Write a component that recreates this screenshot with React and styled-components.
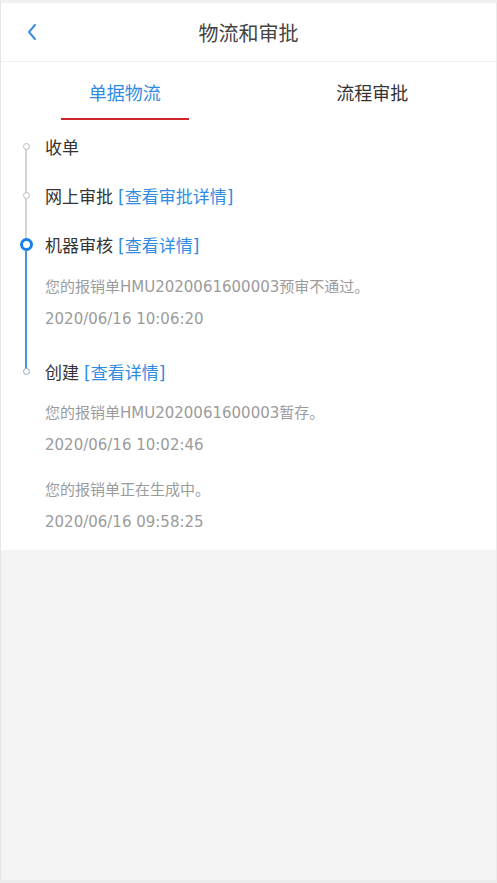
import React, { useState } from "react";
import styled, { createGlobalStyle } from "styled-components";

const GlobalStyle = createGlobalStyle`
  html, body {
    margin: 0;
    padding: 0;
    background: #f0f0f0;
  }
  body {
    font-family: "DejaVu Sans", "Noto Sans CJK SC", sans-serif;
  }
  * {
    box-sizing: border-box;
  }
`;

const Frame = styled.div`
  height: 883px;
  display: flex;
  flex-direction: column;
  border-top: 3px solid #f1f1f1;
  border-left: 1px solid #e6e6e6;
  border-right: 1px solid #ececec;
  border-bottom: 3px solid #ebebeb;
  background: #f4f4f4;
`;

const Header = styled.header`
  display: grid;
  grid-template-columns: 64px 1fr 64px;
  align-items: center;
  height: 59px;
  background: #fff;
  border-bottom: 1px solid #f1f1f1;
`;

const BackButton = styled.button`
  display: flex;
  align-items: center;
  justify-content: flex-start;
  padding: 0 0 0 25px;
  height: 100%;
  border: 0;
  background: none;
  cursor: pointer;
`;

const Title = styled.h1`
  margin: 0;
  text-align: center;
  font-size: 20px;
  font-weight: 400;
  color: #444;
  font-family: "Noto Sans CJK SC", sans-serif;
`;

const Tabs = styled.nav`
  display: flex;
  height: 60px;
  background: #fff;
`;

const Tab = styled.div`
  flex: 1;
  display: flex;
  justify-content: center;
  align-items: stretch;
  cursor: pointer;
`;

const TabLabel = styled.span`
  display: flex;
  align-items: center;
  padding: 4px 28px 0;
  font-size: 18px;
  font-family: "Noto Sans CJK SC", sans-serif;
  color: ${(p) => (p.$active ? "#2f8ce2" : "#333")};
  border-bottom: 2px solid ${(p) => (p.$active ? "#d0252c" : "transparent")};
  margin-bottom: 2px;
`;

const Timeline = styled.ul`
  list-style: none;
  margin: 0;
  padding: 0 0 12px;
  background: #fff;
`;

const Step = styled.li`
  display: grid;
  grid-template-columns: 44px 1fr;
`;

const Rail = styled.div`
  position: relative;

  &::after {
    content: "";
    display: ${(p) => (p.$line ? "block" : "none")};
    position: absolute;
    left: 24px;
    width: 1.5px;
    top: 24px;
    bottom: -24px;
    background: ${(p) => p.$line};
  }
`;

const DotBox = styled.div`
  height: ${(p) => p.$h || 49}px;
  display: flex;
  align-items: center;
  justify-content: center;
  width: 50px;
  position: relative;
  z-index: 1;
`;

const Dot = styled.span`
  display: block;
  width: ${(p) => (p.$big ? 13 : 7)}px;
  height: ${(p) => (p.$big ? 13 : 7)}px;
  border-radius: 50%;
  background: #fff;
  border: ${(p) => (p.$big ? 3 : 1.5)}px solid ${(p) => p.$color};
`;

const Body = styled.div`
  display: flex;
  flex-direction: column;
  padding-bottom: ${(p) => p.$gap || 0}px;
`;

const StepTitle = styled.div`
  height: ${(p) => p.$h || 49}px;
  display: flex;
  align-items: center;
  font-size: 17px;
  color: #333;
  white-space: nowrap;
`;

const Link = styled.a`
  color: #2f8ce2;
  margin-left: 5px;
  text-decoration: none;
  cursor: pointer;
`;

const Record = styled.div`
  display: flex;
  flex-direction: column;
  & + & {
    margin-top: 11px;
  }
`;

const Line = styled.div`
  height: 33px;
  display: flex;
  align-items: center;
  font-size: 15px;
  color: #9b9b9b;
  white-space: nowrap;
`;

const steps = [
  { title: "收单", dot: "#bdbdbd", line: "#d4d4d4" },
  {
    title: "网上审批",
    link: "[查看审批详情]",
    dot: "#bdbdbd",
    line: "#d4d4d4",
  },
  {
    title: "机器审核",
    link: "[查看详情]",
    dot: "#1a7fe8",
    big: true,
    line: "#4a94d4",
    gap: 13,
    records: [
      {
        text: "您的报销单HMU2020061600003预审不通过。",
        time: "2020/06/16 10:06:20",
      },
    ],
  },
  {
    title: "创建",
    link: "[查看详情]",
    dot: "#8fa9c4",
    h: 47,
    records: [
      {
        text: "您的报销单HMU2020061600003暂存。",
        time: "2020/06/16 10:02:46",
      },
      { text: "您的报销单正在生成中。", time: "2020/06/16 09:58:25" },
    ],
  },
];

function App() {
  const [tab, setTab] = useState(0);

  return (
    <>
      <GlobalStyle />
      <Frame>
        <Header>
          <BackButton aria-label="返回">
            <svg width="12" height="18" viewBox="0 0 12 18">
              <polyline
                points="9,2 3,9 9,16"
                fill="none"
                stroke="#3a8ee0"
                strokeWidth="2"
                strokeLinecap="round"
                strokeLinejoin="round"
              />
            </svg>
          </BackButton>
          <Title>物流和审批</Title>
          <div />
        </Header>
        <Tabs>
          {["单据物流", "流程审批"].map((t, i) => (
            <Tab key={t} onClick={() => setTab(i)}>
              <TabLabel $active={tab === i}>{t}</TabLabel>
            </Tab>
          ))}
        </Tabs>
        <Timeline>
          {steps.map((s, i) => (
            <Step key={s.title}>
              <Rail $line={i < steps.length - 1 ? s.line : null}>
                <DotBox $h={s.h}>
                  <Dot $big={s.big} $color={s.dot} />
                </DotBox>
              </Rail>
              <Body $gap={s.gap}>
                <StepTitle $h={s.h}>
                  {s.title}
                  {s.link && <Link>{s.link}</Link>}
                </StepTitle>
                {s.records &&
                  s.records.map((r) => (
                    <Record key={r.time}>
                      <Line>{r.text}</Line>
                      <Line>{r.time}</Line>
                    </Record>
                  ))}
              </Body>
            </Step>
          ))}
        </Timeline>
      </Frame>
    </>
  );
}

export default App;
